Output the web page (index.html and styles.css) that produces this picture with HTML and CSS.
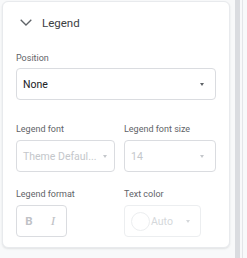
FILE: index.html
```html
<!DOCTYPE html>
<html lang="en">
<head>
    <meta charset="UTF-8">
    <meta name="viewport" content="width=device-width, initial-scale=1">
    <title>Legend</title>
    <link rel="stylesheet" href="styles.css">
</head>
<body>
<div class="panel">
    <div class="scrollArea">
        <section class="card">
            <div class="cardHead">
                <svg class="chevron" width="12" height="7" viewBox="0 0 12 7">
                    <path d="M0.7 0.7 L6 6 L11.3 0.7" fill="none" stroke="#5f6368" stroke-width="1.3"/>
                </svg>
                <span class="cardTitle">Legend</span>
            </div>

            <div class="field first">
                <div class="label">Position</div>
                <div class="select">
                    <span class="value">None</span>
                    <span class="arrow"></span>
                </div>
            </div>

            <div class="row fontRow">
                <div class="field">
                    <div class="label">Legend font</div>
                    <div class="select disabled fontSelect">
                        <span class="value">Theme Defaul...</span>
                        <span class="arrow"></span>
                    </div>
                </div>
                <div class="field">
                    <div class="label">Legend font size</div>
                    <div class="select disabled">
                        <span class="value">14</span>
                        <span class="arrow"></span>
                    </div>
                </div>
            </div>

            <div class="row formatRow">
                <div class="field">
                    <div class="label">Legend format</div>
                    <div class="formatBox">
                        <span class="fmt bold">B</span>
                        <span class="fmt italic">I</span>
                    </div>
                </div>
                <div class="field">
                    <div class="label">Text color</div>
                    <div class="colorBox">
                        <span class="swatch"></span>
                        <span class="value">Auto</span>
                        <span class="arrow"></span>
                    </div>
                </div>
            </div>
        </section>
    </div>
    <div class="scrollbar">
        <div class="thumb"></div>
        <div class="rule"></div>
    </div>
</div>
</body>
</html>
```

FILE: styles.css
```css
body{
    margin: 0;
    background-color: #f8f9fa;
    font-family: Roboto, "Liberation Sans", sans-serif;
}
.panel{
    display: flex;
    height: 258px;
    width: 247px;
}
.scrollArea{
    width: 230px;
    padding: 1px 0 0 2px;
}
.card{
    width: 200px;
    padding: 0 13px 10px 13px;
    background-color: #fff;
    border: 1px solid #e8eaed;
    border-radius: 6px;
    box-shadow: 0 1px 2px rgba(60, 64, 67, 0.12);
}
.cardHead{
    height: 41px;
    display: flex;
    align-items: center;
}
.chevron{
    margin-left: 4px;
    margin-right: 10px;
}
.cardTitle{
    font-size: 11.5px;
    color: #3c4043;
}
.field.first{
    padding-top: 9px;
}
.label{
    font-size: 9px;
    line-height: 12px;
    color: #5f6368;
    margin-bottom: 4px;
}
.row{
    display: grid;
    grid-template-columns: 99px 92px;
    column-gap: 9px;
}
.row .label{
    margin-bottom: 5px;
}
.fontRow{
    margin-top: 23px;
}
.formatRow{
    margin-top: 16px;
}
.select{
    box-sizing: border-box;
    height: 32px;
    border: 1px solid #dadce0;
    border-radius: 4px;
    display: flex;
    align-items: center;
    padding: 0 11px 0 6px;
    font-size: 10.5px;
    color: #202124;
}
.value{
    flex: 1;
    white-space: nowrap;
}
.arrow{
    width: 0;
    height: 0;
    border-left: 2.5px solid transparent;
    border-right: 2.5px solid transparent;
    border-top: 3px solid #5f6368;
}
.select.disabled{
    color: #c4c7cb;
}
.select.disabled .arrow{
    border-top-color: #c4c7cb;
}
.fontSelect{
    padding-right: 7px;
}
.formatBox{
    box-sizing: border-box;
    width: 51px;
    height: 32px;
    border: 1px solid #dadce0;
    border-radius: 4px;
    display: flex;
    align-items: center;
}
.fmt{
    width: 24px;
    text-align: center;
    color: #bfc2c6;
}
.bold{
    font-size: 11.5px;
    font-weight: bold;
}
.italic{
    font-family: "Liberation Serif", serif;
    font-style: italic;
    font-size: 13.5px;
}
.colorBox{
    box-sizing: border-box;
    width: 77px;
    height: 32px;
    border: 1px solid #eceef0;
    border-radius: 4px;
    display: flex;
    align-items: center;
    padding: 0 10px 0 6px;
    font-size: 10.5px;
    color: #d5d8db;
}
.swatch{
    box-sizing: border-box;
    width: 19px;
    height: 19px;
    border: 1px solid #eceef0;
    border-radius: 50%;
    margin-right: 1px;
}
.colorBox .arrow{
    border-top-color: #d5d8db;
}
.scrollbar{
    display: flex;
    padding-left: 3px;
}
.thumb{
    width: 5px;
    background-color: #dadce0;
}
.rule{
    width: 1px;
    margin-left: 2px;
    background-color: #e3e5e8;
}
```
